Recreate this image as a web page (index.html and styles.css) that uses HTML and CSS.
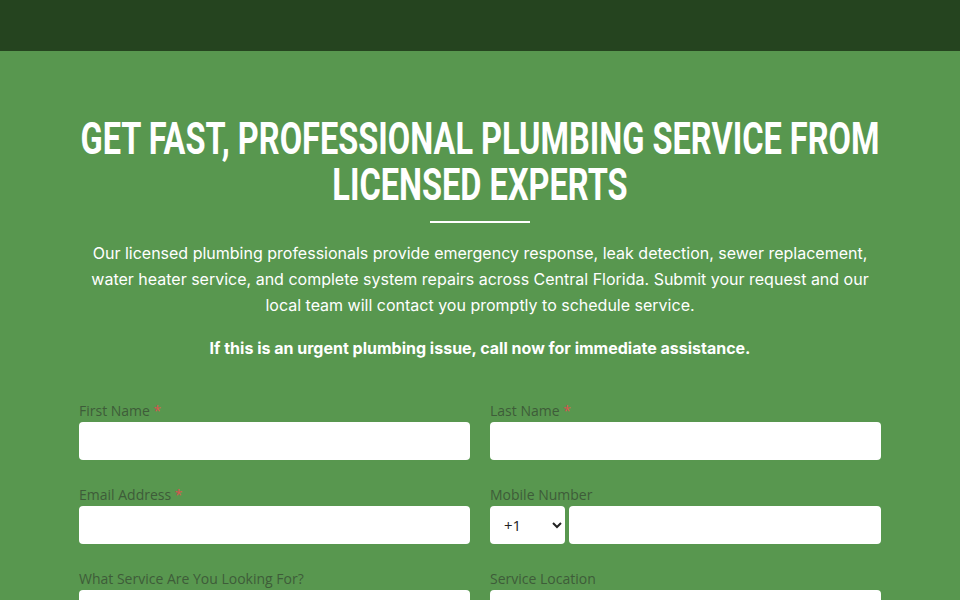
FILE: index.html
```html
<!DOCTYPE html>
<html lang="en">
<head>
<meta charset="utf-8">
<link rel="stylesheet" href="styles.css">
</head>
<body>
<header class="topbar"></header>
<main class="hero">
  <div class="wrap">
    <div class="title-box">
      <h1 class="title">Get Fast, Professional Plumbing Service From<br>Licensed Experts</h1>
    </div>
    <div class="rule"></div>
    <p class="lead">Our licensed plumbing professionals provide emergency response, leak detection, sewer replacement, water heater service, and complete system repairs across Central Florida. Submit your request and our local team will contact you promptly to schedule service.</p>
    <p class="urgent">If this is an urgent plumbing issue, call now for immediate assistance.</p>
    <form class="form">
      <div class="field">
        <label class="label">First Name <span class="req">*</span></label>
        <input class="input" type="text">
      </div>
      <div class="field">
        <label class="label">Last Name <span class="req">*</span></label>
        <input class="input" type="text">
      </div>
      <div class="field">
        <label class="label">Email Address <span class="req">*</span></label>
        <input class="input" type="email">
      </div>
      <div class="field">
        <label class="label">Mobile Number</label>
        <div class="phone">
          <select class="input code"><option>+1</option></select>
          <input class="input" type="tel">
        </div>
      </div>
      <div class="field">
        <label class="label">What Service Are You Looking For?</label>
        <input class="input" type="text">
      </div>
      <div class="field">
        <label class="label">Service Location</label>
        <input class="input" type="text">
      </div>
    </form>
  </div>
</main>
</body>
</html>
```
FILE: styles.css
```css
* { box-sizing: border-box; }
html, body { margin: 0; padding: 0; }
body {
  background: #58974f;
  font-family: Inter, "Liberation Sans", sans-serif;
  overflow: hidden;
  height: 600px;
}
.topbar {
  height: 51px;
  background: #25441f;
}
.hero {
  background: #58974f;
  padding-top: 65px;
}
.wrap {
  width: 802px;
  margin: 0 auto;
}
.title-box {
  display: flex;
  justify-content: center;
}
.title {
  flex: none;
  width: 1300px;
  margin: 0;
  color: #fff;
  text-align: center;
  text-transform: uppercase;
  font-family: Roboto, "Liberation Sans", sans-serif;
  font-weight: 700;
  font-size: 45px;
  line-height: 46px;
  transform: scaleX(0.723);
  transform-origin: 50% 50%;
}
.rule {
  width: 100px;
  height: 2px;
  background: #fff;
  margin: 13px auto 0;
}
.lead {
  margin: 17px 0 0;
  color: #fff;
  text-align: center;
  font-size: 16px;
  line-height: 26px;
  padding: 0 6px;
}
.urgent {
  margin: 17px 0 0;
  color: #fff;
  text-align: center;
  font-size: 16px;
  font-weight: 700;
  line-height: 26px;
}
.form {
  margin-top: 40px;
  display: grid;
  grid-template-columns: 1fr 1fr;
  column-gap: 20px;
  row-gap: 25px;
}
.field {
  display: flex;
  flex-direction: column;
}
.label {
  font-family: "Open Sans", Lato, sans-serif;
  font-size: 14px;
  line-height: 20px;
  color: #3e5c39;
  margin-bottom: 1px;
}
.req { color: #d9534f; }
.input {
  height: 38px;
  border: none;
  border-radius: 4px;
  background: #fff;
  width: 100%;
  font-family: "Open Sans", sans-serif;
  font-size: 14px;
  padding: 0 10px;
}
.phone {
  display: flex;
  gap: 4px;
}
.code {
  width: 75px;
  flex: none;
  color: #222;
  font-size: 15px;
}
```
